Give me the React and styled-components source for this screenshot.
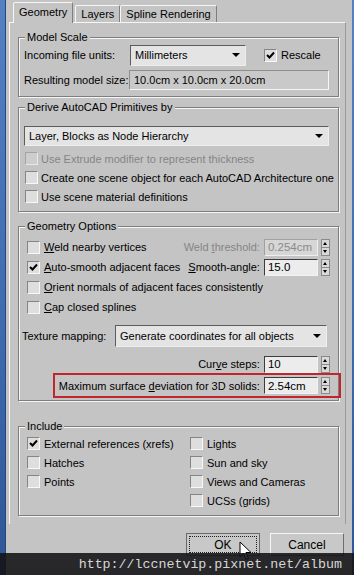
import React from "react";
import styled, { createGlobalStyle } from "styled-components";

const PANEL = "#c4c4c4";
const SHADOW = "#7e7e7e";
const HILITE = "#f6f6f6";
const RED = "#c0262b";

const GlobalStyle = createGlobalStyle`
  body {
    margin: 0;
    font-family: "Liberation Sans", Arial, sans-serif;
    font-size: 11px;
    color: #000;
  }
  * { box-sizing: border-box; }
`;

const Frame = styled.div`
  position: relative;
  width: 354px;
  height: 575px;
  overflow: hidden;
  display: flex;
  padding: 0 6px 0 5px;
  background: linear-gradient(180deg, #5580c2 0%, #3d69ae 60%, #2f5696 100%);
`;

const Dialog = styled.div`
  flex: 1;
  display: flex;
  flex-direction: column;
  background: ${PANEL};
  border-left: 1px solid #27467a;
`;

const TabStrip = styled.div`
  height: 22px;
  display: flex;
  align-items: flex-end;
  padding-left: 7px;
`;

const Tab = styled.div`
  position: relative;
  z-index: ${(p) => (p.$active ? 1 : 0)};
  height: ${(p) => (p.$active ? "21px" : "17px")};
  margin-bottom: ${(p) => (p.$active ? "-1px" : "0")};
  margin-right: ${(p) => (p.$active ? "2px" : "0")};
  padding: 0 5px;
  padding-bottom: ${(p) => (p.$active ? "2px" : "0")};
  display: flex;
  align-items: center;
  background: ${PANEL};
  border: 1px solid;
  border-bottom: none;
  border-color: ${HILITE} ${SHADOW} transparent ${HILITE};
  border-radius: 2px 2px 0 0;
  white-space: nowrap;
`;

const TabPanel = styled.div`
  margin: 0 6px 0 3px;
  padding: 14px 6px 8px 8px;
  border-top: 1px solid ${HILITE};
  border-left: 1px solid ${HILITE};
  border-right: 1px solid #9a9a9a;
  display: flex;
  flex-direction: column;
`;

const Group = styled.div`
  position: relative;
  margin-top: ${(p) => p.$mt || 0}px;
  padding: ${(p) => p.$pad};
  border: 1px solid ${SHADOW};
  box-shadow: inset 1px 1px 0 ${HILITE}, 1px 1px 0 ${HILITE};
  display: flex;
  flex-direction: column;
`;

const Legend = styled.span`
  position: absolute;
  top: -7px;
  left: 6px;
  padding: 0 2px;
  line-height: 13px;
  background: ${PANEL};
`;

const Row = styled.div`
  height: ${(p) => p.$h || 20}px;
  margin-top: ${(p) => p.$mt || 0}px;
  padding-left: ${(p) => p.$pl || 0}px;
  padding-right: ${(p) => p.$pr || 0}px;
  display: flex;
  align-items: center;
  justify-content: ${(p) => (p.$end ? "flex-end" : "flex-start")};
  white-space: nowrap;
`;

const Label = styled.span`
  width: ${(p) => (p.$w ? `${p.$w}px` : "auto")};
  flex-shrink: 0;
  color: ${(p) => (p.$disabled ? "#858585" : "#000")};
  margin-left: ${(p) => (p.$auto ? "auto" : "0")};
  margin-right: ${(p) => p.$mr || 0}px;
`;

const Select = styled.div`
  width: ${(p) => p.$w}px;
  height: ${(p) => p.$h || 21}px;
  flex-shrink: 0;
  display: flex;
  align-items: center;
  justify-content: space-between;
  padding: 0 5px 0 4px;
  background: #e4e4e4;
  border: 1px solid;
  border-color: #5c5c5c #eeeeee #eeeeee #5c5c5c;
`;

const Arrow = styled.span`
  width: 0;
  height: 0;
  border-left: 4px solid transparent;
  border-right: 4px solid transparent;
  border-top: 4px solid #000;
`;

const Readout = styled.div`
  width: ${(p) => p.$w}px;
  height: 20px;
  flex-shrink: 0;
  display: flex;
  align-items: center;
  padding-left: 4px;
  background: #c9c9c9;
  border: 1px solid;
  border-color: #8e8e8e ${HILITE} ${HILITE} #8e8e8e;
`;

const NumField = styled.div`
  width: 54px;
  height: 17px;
  flex-shrink: 0;
  display: flex;
  align-items: center;
  padding-left: 3px;
  font-size: 11.5px;
  overflow: hidden;
  background: ${(p) => (p.$disabled ? "#d6d6d6" : "#ececec")};
  color: ${(p) => (p.$disabled ? "#8a8a8a" : "#000")};
  border: 1px solid;
  border-color: ${(p) =>
    p.$disabled ? "#a0a0a0 #efefef #efefef #a0a0a0" : "#3c3c3c #f2f2f2 #f2f2f2 #3c3c3c"};
`;

const Spin = styled.div`
  width: 9px;
  height: 17px;
  flex-shrink: 0;
  margin-left: 3px;
  display: flex;
  flex-direction: column;
  border: 1px solid #8a8a8a;
  background: #d9d9d9;
`;

const SpinHalf = styled.div`
  flex: 1;
  display: flex;
  align-items: center;
  justify-content: center;
  border-top: ${(p) => (p.$down ? "1px solid #8a8a8a" : "none")};
  &::after {
    content: "";
    border-left: 2px solid transparent;
    border-right: 2px solid transparent;
    ${(p) => (p.$down ? "border-top: 3px solid #000;" : "border-bottom: 3px solid #000;")}
  }
`;

const Box = styled.span`
  width: 13px;
  height: 13px;
  flex-shrink: 0;
  margin-left: ${(p) => p.$ml || 0}px;
  margin-right: ${(p) => p.$gap || 4}px;
  display: flex;
  align-items: center;
  justify-content: center;
  background: ${(p) => (p.$disabled ? "#cdcdcd" : "#dedede")};
  border: 1px solid;
  border-color: ${(p) =>
    p.$disabled ? "#a4a4a4 #e8e8e8 #e8e8e8 #a4a4a4" : "#858585 #f8f8f8 #f8f8f8 #858585"};
`;

const Redbox = styled.div`
  height: 25px;
  margin: 0 -3px 0 31px;
  padding-right: 9px;
  display: flex;
  align-items: center;
  justify-content: flex-end;
  border: 2px solid ${RED};
  white-space: nowrap;
`;

const IncludeGrid = styled.div`
  display: grid;
  grid-template-columns: 163px 1fr;
  padding-left: 8px;
`;

const IncludeCol = styled.div`
  display: flex;
  flex-direction: column;
`;

const ButtonRow = styled.div`
  display: flex;
  justify-content: flex-end;
  gap: 10px;
  padding: 9px 8px 0 0;
`;

const Button = styled.div`
  width: 74px;
  height: 23px;
  padding: 2px;
  display: flex;
  background: #c8c8c8;
  border: 1px solid;
  border-color: ${(p) => (p.$default ? "#6a6a6a" : `${HILITE} #6e6e6e #6e6e6e ${HILITE}`)};
  font-size: 12px;
`;

const ButtonFace = styled.span`
  flex: 1;
  display: flex;
  align-items: center;
  justify-content: center;
  border: 1px dotted ${(p) => (p.$focus ? "#222" : "transparent")};
`;

const Watermark = styled.div`
  position: absolute;
  left: 0;
  right: 0;
  bottom: 0;
  height: 22px;
  padding-right: 12px;
  display: flex;
  align-items: center;
  justify-content: flex-end;
  background: rgba(18, 18, 20, 0.88);
  color: #d6d6d6;
  font-family: "Liberation Mono", "Courier New", monospace;
  font-size: 13.3px;
`;

const Cursor = styled.svg`
  position: absolute;
  left: 239px;
  top: 541px;
`;

const Check = ({ checked, disabled, gap, ml }) => (
  <Box $disabled={disabled} $gap={gap} $ml={ml}>
    {checked && (
      <svg width="9" height="9" viewBox="0 0 9 9">
        <path d="M1 4 L3.5 6.5 L8 1.5" fill="none" stroke="#000" strokeWidth="2" />
      </svg>
    )}
  </Box>
);

const Spinner = ({ value, disabled }) => (
  <>
    <NumField $disabled={disabled}>{value}</NumField>
    <Spin>
      <SpinHalf />
      <SpinHalf $down />
    </Spin>
  </>
);

const CheckRow = ({ children, checked, disabled, pl, h = 20, gap }) => (
  <Row $h={h} $pl={pl}>
    <Check checked={checked} disabled={disabled} gap={gap} />
    <Label $disabled={disabled}>{children}</Label>
  </Row>
);

export default function App() {
  return (
    <Frame>
      <GlobalStyle />
      <Dialog>
        <TabStrip>
          <Tab $active>Geometry</Tab>
          <Tab>Layers</Tab>
          <Tab>Spline Rendering</Tab>
        </TabStrip>

        <TabPanel>
          <Group $pad="6px 4px 6px 5px">
            <Legend>Model Scale</Legend>
            <Row $h={22}>
              <Label $w={106}>Incoming file units:</Label>
              <Select $w={116}>
                Millimeters
                <Arrow />
              </Select>
              <Check checked ml={18} />
              <Label>Rescale</Label>
            </Row>
            <Row $h={20} $mt={4}>
              <Label $w={105}>Resulting model size:</Label>
              <Readout $w={200}>10.0cm x 10.0cm x 20.0cm</Readout>
            </Row>
          </Group>

          <Group $mt={10} $pad="18px 4px 5px 5px">
            <Legend>Derive AutoCAD Primitives by</Legend>
            <Select $w={305} $h={20}>
              Layer, Blocks as Node Hierarchy
              <Arrow />
            </Select>
            <div style={{ height: 3 }} />
            <CheckRow h={19} pl={1} gap={3} disabled>
              Use Extrude modifier to represent thickness
            </CheckRow>
            <CheckRow h={19} pl={1} gap={3}>
              Create one scene object for each AutoCAD Architecture one
            </CheckRow>
            <CheckRow h={19} pl={1} gap={3}>
              Use scene material definitions
            </CheckRow>
          </Group>

          <Group $mt={14} $pad="10px 0 2px 3px">
            <Legend>Geometry Options</Legend>
            <Row $pl={5} $pr={8}>
              <Check />
              <Label>
                <u>W</u>eld nearby vertices
              </Label>
              <Label $auto $mr={4} $disabled>
                Weld <u>t</u>hreshold:
              </Label>
              <Spinner value="0.254cm" disabled />
            </Row>
            <Row $pl={5} $pr={8}>
              <Check checked />
              <Label>
                <u>A</u>uto-smooth adjacent faces
              </Label>
              <Label $auto $mr={4}>
                <u>S</u>mooth-angle:
              </Label>
              <Spinner value="15.0" />
            </Row>
            <CheckRow pl={5}>
              <u>O</u>rient normals of adjacent faces consistently
            </CheckRow>
            <CheckRow pl={5}>
              <u>C</u>ap closed splines
            </CheckRow>
            <Row $h={22} $mt={8}>
              <Label $w={93}>Texture mapping:</Label>
              <Select $w={212} $h={22}>
                Generate coordinates for all objects
                <Arrow />
              </Select>
            </Row>
            <Row $h={18} $mt={8} $end $pr={8}>
              <Label $mr={4}>
                Cur<u>v</u>e steps:
              </Label>
              <Spinner value="10" />
            </Row>
            <Redbox>
              <Label $mr={4}>
                Maximum surface <u>d</u>eviation for 3D solids:
              </Label>
              <Spinner value="2.54cm" />
            </Redbox>
          </Group>

          <Group $mt={25} $pad="7px 4px 5px 0">
            <Legend>Include</Legend>
            <IncludeGrid>
              <IncludeCol>
                <CheckRow h={19} checked>External references (xrefs)</CheckRow>
                <CheckRow h={19}>Hatches</CheckRow>
                <CheckRow h={19}>Points</CheckRow>
              </IncludeCol>
              <IncludeCol>
                <CheckRow h={19}>Lights</CheckRow>
                <CheckRow h={19}>Sun and sky</CheckRow>
                <CheckRow h={19}>Views and Cameras</CheckRow>
                <CheckRow h={19}>UCSs (grids)</CheckRow>
              </IncludeCol>
            </IncludeGrid>
          </Group>
        </TabPanel>

        <ButtonRow>
          <Button $default>
            <ButtonFace $focus>OK</ButtonFace>
          </Button>
          <Button>
            <ButtonFace>Cancel</ButtonFace>
          </Button>
        </ButtonRow>
      </Dialog>

      <Cursor width="13" height="20" viewBox="0 0 13 20">
        <path d="M1 1 L1 16 L4.5 12.5 L7 18.5 L9.5 17.5 L7 11.5 L12 11.5 Z" fill="#fff" stroke="#000" strokeWidth="1" />
      </Cursor>

      <Watermark>http://lccnetvip.pixnet.net/album</Watermark>
    </Frame>
  );
}
